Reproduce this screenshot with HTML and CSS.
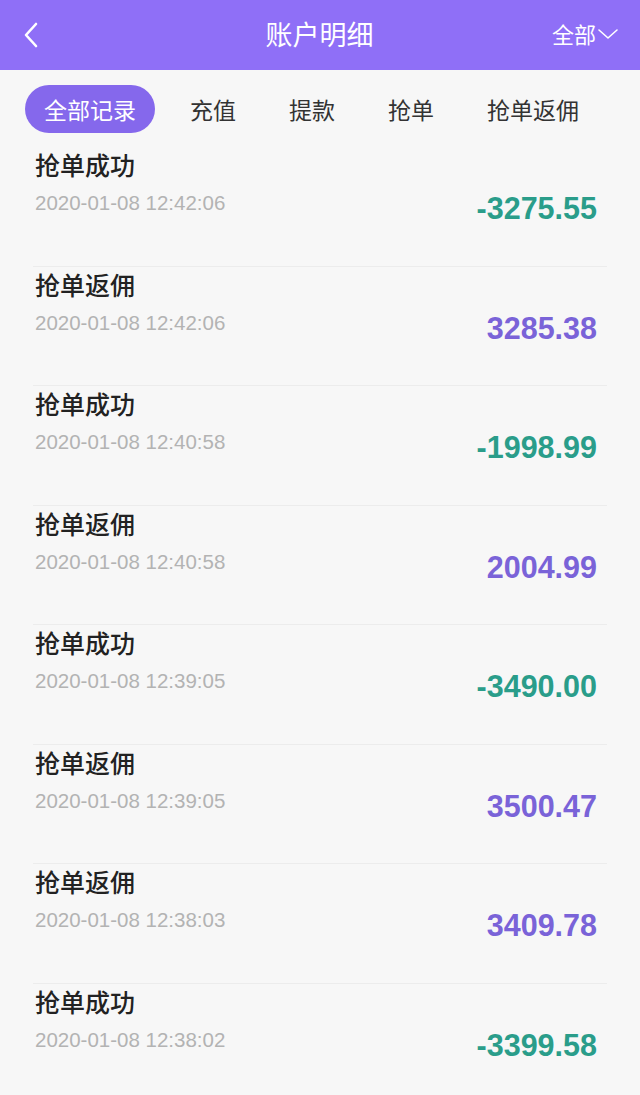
FILE: index.html
```html
<!DOCTYPE html>
<html lang="zh-CN">
<head>
  <meta charset="UTF-8">
  <meta name="viewport" content="width=device-width, initial-scale=1">
  <title>账户明细</title>
  <link rel="stylesheet" href="styles.css">
</head>
<body>

  <header class="topbar">
    <a class="back" href="#">
      <svg width="16" height="26" viewBox="0 0 16 26"><path d="M13 2 L3 13 L13 24" fill="none" stroke="#fff" stroke-width="2.6" stroke-linecap="round" stroke-linejoin="round"/></svg>
    </a>
    <h1>账户明细</h1>
    <div class="filter">全部
      <svg width="22" height="12" viewBox="0 0 22 12"><path d="M2 2 L11 10 L20 2" fill="none" stroke="#fff" stroke-width="1.6" stroke-linecap="round" stroke-linejoin="round"/></svg>
    </div>
  </header>

  <nav class="tabs">
    <span class="tab active">全部记录</span>
    <span class="tab">充值</span>
    <span class="tab">提款</span>
    <span class="tab">抢单</span>
    <span class="tab">抢单返佣</span>
  </nav>

  <ul class="records">
    <li class="record">
      <div class="info"><div class="title">抢单成功</div><div class="date">2020-01-08 12:42:06</div></div>
      <div class="amount out">-3275.55</div>
    </li>
    <li class="record">
      <div class="info"><div class="title">抢单返佣</div><div class="date">2020-01-08 12:42:06</div></div>
      <div class="amount in">3285.38</div>
    </li>
    <li class="record">
      <div class="info"><div class="title">抢单成功</div><div class="date">2020-01-08 12:40:58</div></div>
      <div class="amount out">-1998.99</div>
    </li>
    <li class="record">
      <div class="info"><div class="title">抢单返佣</div><div class="date">2020-01-08 12:40:58</div></div>
      <div class="amount in">2004.99</div>
    </li>
    <li class="record">
      <div class="info"><div class="title">抢单成功</div><div class="date">2020-01-08 12:39:05</div></div>
      <div class="amount out">-3490.00</div>
    </li>
    <li class="record">
      <div class="info"><div class="title">抢单返佣</div><div class="date">2020-01-08 12:39:05</div></div>
      <div class="amount in">3500.47</div>
    </li>
    <li class="record">
      <div class="info"><div class="title">抢单返佣</div><div class="date">2020-01-08 12:38:03</div></div>
      <div class="amount in">3409.78</div>
    </li>
    <li class="record">
      <div class="info"><div class="title">抢单成功</div><div class="date">2020-01-08 12:38:02</div></div>
      <div class="amount out">-3399.58</div>
    </li>
  </ul>

</body>
</html>
```

FILE: styles.css
```css
body {
  margin: 0;
  padding: 0;
  background: #f7f7f7;
  font-family: "Liberation Sans", "Noto Sans CJK SC", sans-serif;
  overflow: hidden;
}
.topbar {
  height: 70px;
  background: #8f6ff7;
  display: flex;
  align-items: center;
  justify-content: space-between;
  padding: 0 21px 0 23px;
  color: #fff;
}
.back {
  display: flex;
  width: 60px;
}
.topbar h1 {
  margin: 0 0 4px 4px;
  font-size: 27px;
  font-weight: normal;
  font-family: "Noto Sans CJK SC", sans-serif;
}
.filter {
  width: 67px;
  display: flex;
  align-items: center;
  font-size: 22px;
  font-family: "Noto Sans CJK SC", sans-serif;
  margin-bottom: 4px;
}
.filter svg {
  margin-left: 1px;
  margin-top: 2px;
}
.tabs {
  height: 76px;
  box-sizing: border-box;
  display: flex;
  align-items: center;
  padding: 2px 0 0 25px;
  font-family: "Noto Sans CJK SC", sans-serif;
  white-space: nowrap;
}
.tab {
  flex-shrink: 0;
  font-size: 23px;
  color: #333;
  padding: 0 26.5px;
  line-height: 48px;
}
.tab.active {
  background: #8568ec;
  color: #fff;
  border-radius: 24px;
  padding: 0 19px;
  margin-right: 8.5px;
}
.records {
  list-style: none;
  margin: 0;
  padding: 0;
}
.record {
  height: 119.5px;
  box-sizing: border-box;
  margin: 0 33px;
  padding: 2px 10px 0 2px;
  border-top: 1px solid #ececec;
  display: flex;
  justify-content: space-between;
}
.record:first-child {
  border-top-color: transparent;
}
.title {
  font-family: "Noto Sans CJK SC", sans-serif;
  font-size: 25px;
  font-weight: 500;
  color: #222;
  line-height: 30px;
}
.date {
  margin-top: 12px;
  font-size: 20.5px;
  color: #b3b3b3;
  line-height: 24px;
}
.amount {
  margin-top: 41px;
  font-size: 30.5px;
  font-weight: bold;
  line-height: 36px;
}
.amount.out {
  color: #2a9d8a;
}
.amount.in {
  color: #7a63d8;
}
```
